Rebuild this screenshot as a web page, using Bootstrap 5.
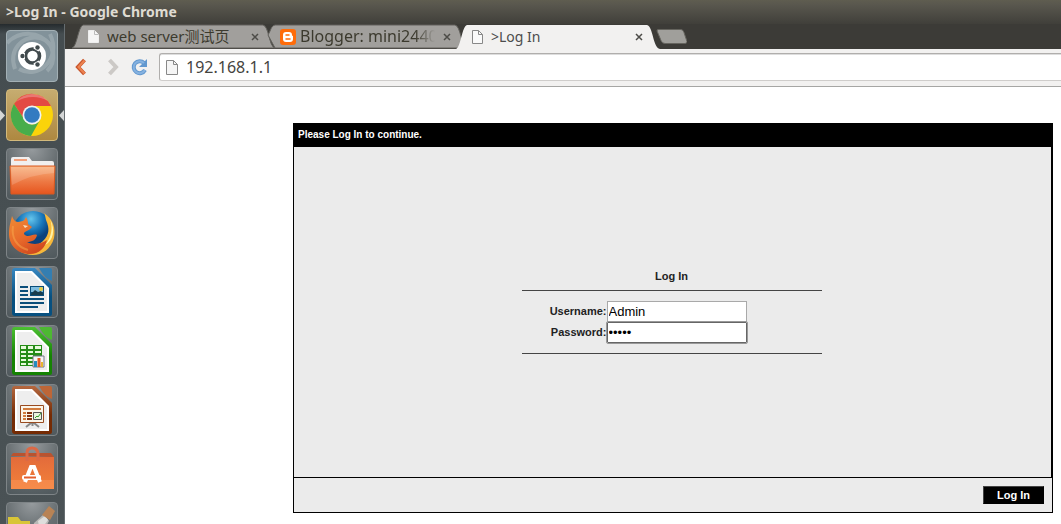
<!DOCTYPE html>
<html lang="en">
<head>
<meta charset="utf-8">
<meta name="viewport" content="width=device-width, initial-scale=1">
<title>&gt;Log In</title>
<link href="https://cdn.jsdelivr.net/npm/bootstrap@5.3.0/dist/css/bootstrap.min.css" rel="stylesheet">
<style>
body{font-family:"Noto Sans","Noto Sans CJK SC",sans-serif;background:#fff;color:#3c3b37}
.titlebar{height:24px;padding-left:6px;background:linear-gradient(#5f5d50 0,#59574e 20%,#403f3a 100%);color:#dfdbd2;font-size:14px;line-height:24px;font-weight:700}
.launcher{width:65px;background:linear-gradient(#252b2e 0,#454d50 10px,#4a5255 100%);border-right:1px solid #666d70}
.launcher-items{gap:7px;padding:6px}
.tile{width:52px;height:52px;border-radius:4px;border:1px solid #7e8487;background:radial-gradient(circle at 50% 0,#969b9e 0,#697073 45%,#4f585c 100%);color:inherit}
.tile svg{display:block;width:50px;height:50px}
.tile.dash{background:#82929a;border-color:#a3b0b5}
.tile.active{background:linear-gradient(#c6ac70,#ae8840);border-color:#d3ba7c}
.pip{top:20px;width:5px;height:11px;background:#d4d6d6}
.pip-l{left:-7px;clip-path:polygon(0 0,100% 50%,0 100%)}
.pip-r{right:-7px;clip-path:polygon(100% 0,0 50%,100% 100%)}
.tabstrip{height:25px;padding-left:7px;background:#3c3b37}
.tab-item{width:204px;height:25px;margin-right:-12px;padding-left:16px;padding-right:17px;color:#3c3a2e}
.tab-item .shape{inset:0;width:100%;height:100%}
.tab-item.current{z-index:2;color:#4c4c4c}
.tab-title{height:24px;font-size:14px;line-height:23px;overflow:hidden;white-space:nowrap}
.tab-title.mixed{font-size:15px}
.tab-title.wide{font-size:16px;line-height:22px;-webkit-mask-image:linear-gradient(90deg,#000 85%,transparent);mask-image:linear-gradient(90deg,#000 85%,transparent)}
.plain{border:0;background:none;padding:0;line-height:0}
.toolbar{height:38px;background:#f2f1f0;border-bottom:1px solid #a6a6a4;padding:4px 0 5px 10px}
.address{height:28px;border:1px solid #b0aeac;border-right:0;border-bottom-color:#cfcdcb;border-radius:3px 0 0 3px;background:#fff;margin-left:11px;padding-left:6px;box-shadow:inset 0 1px #ddd}
.address input{border:0;outline:0;background:none;font-size:16px;line-height:24px;padding:0;color:#45443f}
.webpage{padding:36px 8px 11px;font-family:"Liberation Sans",Arial,sans-serif;color:#222}
.panel{max-width:760px;min-height:390px;background:#ebebeb;border:1px solid #000}
.panel-title{height:23px;background:#000;color:#fff;font-size:10px;line-height:22px;font-weight:700;padding-left:4px;margin:0}
.panel-main{border-right:1px solid #000;border-bottom:1px solid #000;padding:0 2px 2px 0}
.panel-foot{height:34px;padding-right:8px}
.login-box{width:300px;font-size:11px;font-weight:700}
.login-box h2{font-size:11px;line-height:16px;font-weight:700;padding-bottom:6px;margin:0}
.login-rows{border-top:1px solid #444;border-bottom:1px solid #444;padding:10px 0}
.login-rows label{width:85px;line-height:21px;text-align:right}
.login-rows input{width:140px;height:21px;border:1px solid #a9a9a9;padding:1px;font-size:13px;color:#000;background:#fff;border-radius:0}
.login-rows input[type=password]{border-color:#666;border-radius:1px;outline:1px solid #999}
.submit{width:61px;height:18px;background:#000;color:#fff;border:1px solid #000;border-top-color:#444;border-left-color:#444;font-size:11px;line-height:16px;font-weight:700;padding:0}
</style>
</head>
<body class="d-flex flex-column min-vh-100">
<header class="titlebar"><span>&gt;Log In - Google Chrome</span></header>
<div class="d-flex flex-grow-1">
<nav class="launcher flex-shrink-0 position-relative overflow-hidden" aria-label="Launcher">
<div class="launcher-items position-absolute top-0 start-0 d-flex flex-column">
<button class="tile dash p-0" aria-label="Dash"><svg viewBox="0 0 50 50"><g fill="none" stroke="#b7c2c5" stroke-width="4" opacity=".4"><path d="M8 38C1 18 16 4 33 7c15 4 17 24 7 33"/><path d="M43 3C55 28 31 49 12 38"/><path d="M0 12C12 0 32-1 43 14"/></g><circle cx="25" cy="25" r="14" fill="#fff"/><circle cx="25.500" cy="25" r="7" fill="none" stroke="#414a4d" stroke-width="3.600"/><path d="M18 25h-4m15-6 3-5m-3 17 3 5" stroke="#fff" stroke-width="6"/><g fill="#414a4d"><circle cx="15.500" cy="25" r="2.200"/><circle cx="30.500" cy="16.500" r="2.200"/><circle cx="30.500" cy="33.500" r="2.200"/></g></svg></button>
<button class="tile active position-relative p-0" aria-label="Chrome"><i class="pip pip-l position-absolute"></i><i class="pip pip-r position-absolute"></i><svg viewBox="0 0 50 50"><circle cx="25" cy="25" r="21" fill="#fbd30a"/><path d="M7 14a21 21 0 0 1 37 2H25a9 9 0 0 0-8 13z" fill="#e34a43"/><path d="M7 14a21 21 0 0 0 17 32l9-16a9 9 0 0 1-16-1z" fill="#47ad4b"/><path d="M9 12a21 21 0 0 1 32-1c-10-6-23-5-32 1" fill="#fff" opacity=".25"/><circle cx="25" cy="25" r="9.500" fill="#eef3f5"/><circle cx="25" cy="25" r="7.800" fill="#337bc1"/></svg></button>
<button class="tile p-0" aria-label="Files"><svg viewBox="0 0 50 50"><defs><linearGradient id="folder" x2="0" y2="1"><stop stop-color="#f9b17c"/><stop offset=".55" stop-color="#ed7944"/><stop offset="1" stop-color="#e6551e"/></linearGradient></defs><path d="M4 18V10q0-2 2-2h16l3 4h20q2 0 2 2v6z" fill="#f0efef"/><path d="M7 11h13" stroke="#f4a17b" stroke-width="2"/><path d="M3 17h45l-1 28H4z" fill="url(#folder)" stroke="#d95820"/><path d="M4 18h43v6Q25 25 5 36z" fill="#fff" opacity=".16"/></svg></button>
<button class="tile p-0" aria-label="Firefox"><svg viewBox="0 0 50 50"><defs><radialGradient id="globe" cx=".45" cy=".2"><stop stop-color="#65c5ec"/><stop offset=".6" stop-color="#1674b9"/><stop offset="1" stop-color="#0c427d"/></radialGradient><linearGradient id="fox" x2=".6" y2="1"><stop stop-color="#ef8c35"/><stop offset=".6" stop-color="#e8692a"/><stop offset="1" stop-color="#d04a20"/></linearGradient></defs><circle cx="26" cy="23" r="20" fill="url(#globe)"/><path d="M39 12c-1-4-1-6-2-7 9 6 12 15 10 25-3 11-12 17-21 17-10 0-17-5-20-12 11 6 24 4 30-2 6-6 7-12 3-21" fill="#f6b83b"/><path d="M43 11c3 8 2 18-5 26 8-4 11-15 5-26" fill="#fff3a6"/><path d="M5 8c1 3 3 6 6 6 4-1 6 0 8-5 2 3 2 5 2 7l4 3-2 2c-2 2-6 2-6 5 4 5 9-1 13 1-1 5-5 7-10 7 8 4 15 1 20-2-2 8-8 14-17 14C9 46 2 36 2 26 2 18 4 13 5 8" fill="url(#fox)"/><path d="M6 18c-2 12 4 21 15 24" stroke="#f9a94e" stroke-width="2" fill="none" opacity=".5"/><path d="m16 17 5 1-3 2z" fill="#f9dfbc"/></svg></button>
<button class="tile p-0" aria-label="Writer"><svg viewBox="0 0 50 50"><defs><linearGradient id="blue" x2="0" y2="1"><stop stop-color="#3787c1"/><stop offset=".6" stop-color="#075080"/></linearGradient></defs><path d="M8 1h20l17 17v29q0 2-2 2H8q-3 0-3-3V4q0-3 3-3" fill="url(#blue)"/><path d="M8 4h17l17 17v25H8z" fill="#fff"/><path d="M10 6h14l16 16v22H10z" fill="#eee"/><path d="M32 1h11q2 0 2 2v11Q38 12 32 1" fill="#347eb1"/><path d="M13 20h8m-8 4h8m-8 4h8m-8 4h24m-24 4h24m-24 4h18" stroke="#0b4e7a" stroke-width="2"/><path d="M23 19h14v10H23z" fill="#0a4e7a"/><path d="M24 20h12v5H24z" fill="#80bddf"/><path d="m24 27 4-4 3 2 3-1 2 3v1H24z" fill="#193c4d"/><circle cx="34" cy="22" r="2" fill="#e7cb3e"/></svg></button>
<button class="tile p-0" aria-label="Calc"><svg viewBox="0 0 50 50"><defs><linearGradient id="green" x2="0" y2="1"><stop stop-color="#4cc032"/><stop offset=".6" stop-color="#158303"/></linearGradient></defs><path d="M8 1h20l17 17v29q0 2-2 2H8q-3 0-3-3V4q0-3 3-3" fill="url(#green)"/><path d="M8 4h17l17 17v25H8z" fill="#fff"/><path d="M10 6h14l16 16v22H10z" fill="#eee"/><path d="M32 1h11q2 0 2 2v11Q38 12 32 1" fill="#4db832"/><path d="M13 19h22v21H13z" fill="#248c16"/><path d="M14 20h5v3h-5zm7 0h5v3h-5zm7 0h6v3h-6zM14 25h5v2h-5zm7 0h5v2h-5zm7 0h6v2h-6zM14 29h5v2h-5zm7 0h5v2h-5zM14 33h5v2h-5zm7 0h5v2h-5zM14 37h5v2h-5zm7 0h5v2h-5z" fill="#e7fadc"/><path d="M26 30h11v11H26z" fill="#f6f6f6" stroke="#778"/><path d="M28.500 41v-6" stroke="#278cc0" stroke-width="3"/><path d="M32 41v-9" stroke="#e45b22" stroke-width="3"/><path d="M35 41v-5" stroke="#e7b52f" stroke-width="2"/></svg></button>
<button class="tile p-0" aria-label="Impress"><svg viewBox="0 0 50 50"><defs><linearGradient id="brown" x2="0" y2="1"><stop stop-color="#b5683f"/><stop offset=".6" stop-color="#752b04"/></linearGradient></defs><path d="M8 1h20l17 17v29q0 2-2 2H8q-3 0-3-3V4q0-3 3-3" fill="url(#brown)"/><path d="M8 4h17l17 17v25H8z" fill="#fff"/><path d="M10 6h14l16 16v22H10z" fill="#eee"/><path d="M32 1h11q2 0 2 2v11Q38 12 32 1" fill="#bd6637"/><path d="m19 42 5-4h3l5 4M25.500 37v4" stroke="#888" stroke-width="2" fill="none"/><path d="M13.500 20.500h23v17h-23z" fill="#fbf5e9" stroke="#994b20"/><path d="M16 24h18M16 28h3m-3 3h3m-3 3h3" stroke="#d17b3d" stroke-width="2"/><path d="M20 28h5m-5 3h5m-5 3h5" stroke="#863510" stroke-width="2"/><path d="M26.500 27.500h8v7h-8z" fill="#e9f3df" stroke="#555"/><path d="m28 33 2-2 1 1 3-4" stroke="#34a02c" fill="none"/></svg></button>
<button class="tile p-0" aria-label="Software Centre"><svg viewBox="0 0 50 50"><defs><linearGradient id="bag" x2="0" y2="1"><stop stop-color="#e36b3b"/><stop offset="1" stop-color="#f38139"/></linearGradient></defs><path d="M4 12 6 9h38l3 4z" fill="#b9532f"/><path d="M4 13h43v32H4z" fill="url(#bag)"/><path d="M4 36h43v9H4z" fill="#fa955b" opacity=".5"/><path d="M20 17V9q0-5 5-5t6 5v8" fill="none" stroke="#db6946" stroke-width="3"/><path d="m18 38 6-15h3l6 15" fill="none" stroke="#fff" stroke-width="4"/><rect x="15" y="31" width="19" height="5" rx="2" fill="#fff"/><path d="M17 33.500h12" stroke="#e4602f" stroke-width="2"/></svg></button>
<button class="tile p-0" aria-label="Tools"><svg viewBox="0 0 50 50"><path d="M1 14h10l3 4h9v32H1z" fill="#d8c537"/><path d="M7 23h5l2-2h9v28H7z" fill="#c42a2e"/><path d="m27 20 10-9 5 7-12 22-5-3z" fill="#b8b8b6"/><path d="m31 18 7-5 3 4-8 11z" fill="#dededc"/><path d="m35 12 7-9 6 5-5 9z" fill="#b88355"/></svg></button>
</div>
</nav>
<div class="d-flex flex-column flex-grow-1 overflow-hidden">
<nav class="tabstrip d-flex" aria-label="Tabs">
<div class="tab-item position-relative flex-shrink-0"><svg class="shape position-absolute" viewBox="0 0 204 25" preserveAspectRatio="none"><path d="M0 24C5 23 6 3 11 1h180c6 1 6 22 12 23z" fill="#a19f9c" stroke="#62615c"/></svg><div class="position-relative d-flex align-items-center h-100"><svg class="me-2 flex-shrink-0" width="11" height="13"><path d="M.5.500h6l4 4v8H.500z" fill="#f5f5f5" stroke="#eee"/><path d="M6.500.500v4h4" fill="none" stroke="#bbb"/></svg><span class="tab-title mixed flex-grow-1">web server测试页</span><button class="plain" aria-label="Close tab"><svg width="8" height="8"><path d="m1 1 6 6m0-6-6 6" stroke="#4d4c48" stroke-width="1.500"/></svg></button></div></div>
<div class="tab-item position-relative flex-shrink-0"><svg class="shape position-absolute" viewBox="0 0 204 25" preserveAspectRatio="none"><path d="M11 24 4 11C7 6 7 2 11 1h180c6 1 6 22 12 23z" fill="#a19f9c" stroke="#62615c"/></svg><div class="position-relative d-flex align-items-center h-100"><svg class="me-1 flex-shrink-0" width="16" height="16"><rect width="16" height="16" rx="3" fill="#ff6c0a"/><path d="M6 3h3q3 0 3 3 0 1 1 1v3q0 3-3 3H6q-3 0-3-3V6q0-3 3-3" fill="#fff"/><path d="M6 6h3M6 10h4" stroke="#ff6c0a" stroke-width="1.500" stroke-linecap="round"/></svg><span class="tab-title wide flex-grow-1">Blogger: mini2440</span><button class="plain ms-2" aria-label="Close tab"><svg width="8" height="8"><path d="m1 1 6 6m0-6-6 6" stroke="#4d4c48" stroke-width="1.500"/></svg></button></div></div>
<div class="tab-item current position-relative flex-shrink-0"><svg class="shape position-absolute" viewBox="0 0 204 25" preserveAspectRatio="none"><path d="M0 25C5 23 6 2 11 1h180c6 1 6 23 13 24z" fill="#f2f1f0"/></svg><div class="position-relative d-flex align-items-center h-100"><svg class="me-2 flex-shrink-0" width="11" height="14"><path d="M.5.500h6l4 4v9H.500z" fill="#fafafa" stroke="#888"/><path d="M6.500.500v4h4" fill="none" stroke="#888"/></svg><span class="tab-title flex-grow-1">&gt;Log In</span><button class="plain" aria-label="Close tab"><svg width="8" height="8"><path d="m1 1 6 6m0-6-6 6" stroke="#4d4c48" stroke-width="1.500"/></svg></button></div></div>
<button class="plain ms-2 pb-1 pt-1" aria-label="New tab"><svg width="31" height="15"><path d="M2 .500h23q2 0 3 3l3 9q0 2-2 2H9q-3 0-4-3L1 2Q1 .500 2 .500" fill="#a09f9b" stroke="#65645e"/></svg></button>
</nav>
<div class="toolbar d-flex align-items-center">
<button class="plain" aria-label="Back"><svg width="12" height="18"><path d="M9.500 2 3 9l6.500 7" fill="none" stroke="#c9562d" stroke-width="4"/><path d="M9.500 2.500 3.500 9l6 6.500" fill="none" stroke="#ed8350" stroke-width="2"/></svg></button>
<button class="plain ms-3 ps-1" aria-label="Forward"><svg width="12" height="18"><path d="M2.500 2 9 9l-6.500 7" fill="none" stroke="#ccc9c6" stroke-width="4"/></svg></button>
<button class="plain ms-2 ps-1" aria-label="Reload"><svg width="17" height="18"><path d="M13 5A6 6 0 1 0 14 12" fill="none" stroke="#6298cf" stroke-width="4"/><path d="M16 1v8H8z" fill="#6298cf"/><path d="M13 5A6 6 0 1 0 14 12" fill="none" stroke="#86b2e0" stroke-width="2"/></svg></button>
<div class="address d-flex align-items-center flex-grow-1"><svg class="flex-shrink-0 me-2" width="12" height="15"><path d="M.5.500h7l4 4v10H.5z" fill="#f5f5f5" stroke="#888"/><path d="M7.500.500v4h4" fill="none" stroke="#888"/></svg><input class="flex-grow-1" type="text" aria-label="Address" value="192.168.1.1"></div>
</div>
<main class="webpage d-flex flex-grow-1 justify-content-end">
<form class="panel d-flex flex-column w-100">
<h1 class="panel-title">Please Log In to continue.</h1>
<div class="panel-main d-flex flex-grow-1 justify-content-center align-items-center">
<div class="login-box">
<h2 class="text-center">Log In</h2>
<div class="login-rows">
<div class="d-flex"><label for="user">Username:</label><input id="user" type="text" value="Admin"></div>
<div class="d-flex"><label for="pass">Password:</label><input id="pass" type="password" value="admin"></div>
</div>
</div>
</div>
<div class="panel-foot d-flex align-items-center justify-content-end"><button class="submit" type="button">Log In</button></div>
</form>
</main>
</div>
</div>
<script src="https://cdn.jsdelivr.net/npm/bootstrap@5.3.0/dist/js/bootstrap.bundle.min.js"></script>
</body>
</html>
